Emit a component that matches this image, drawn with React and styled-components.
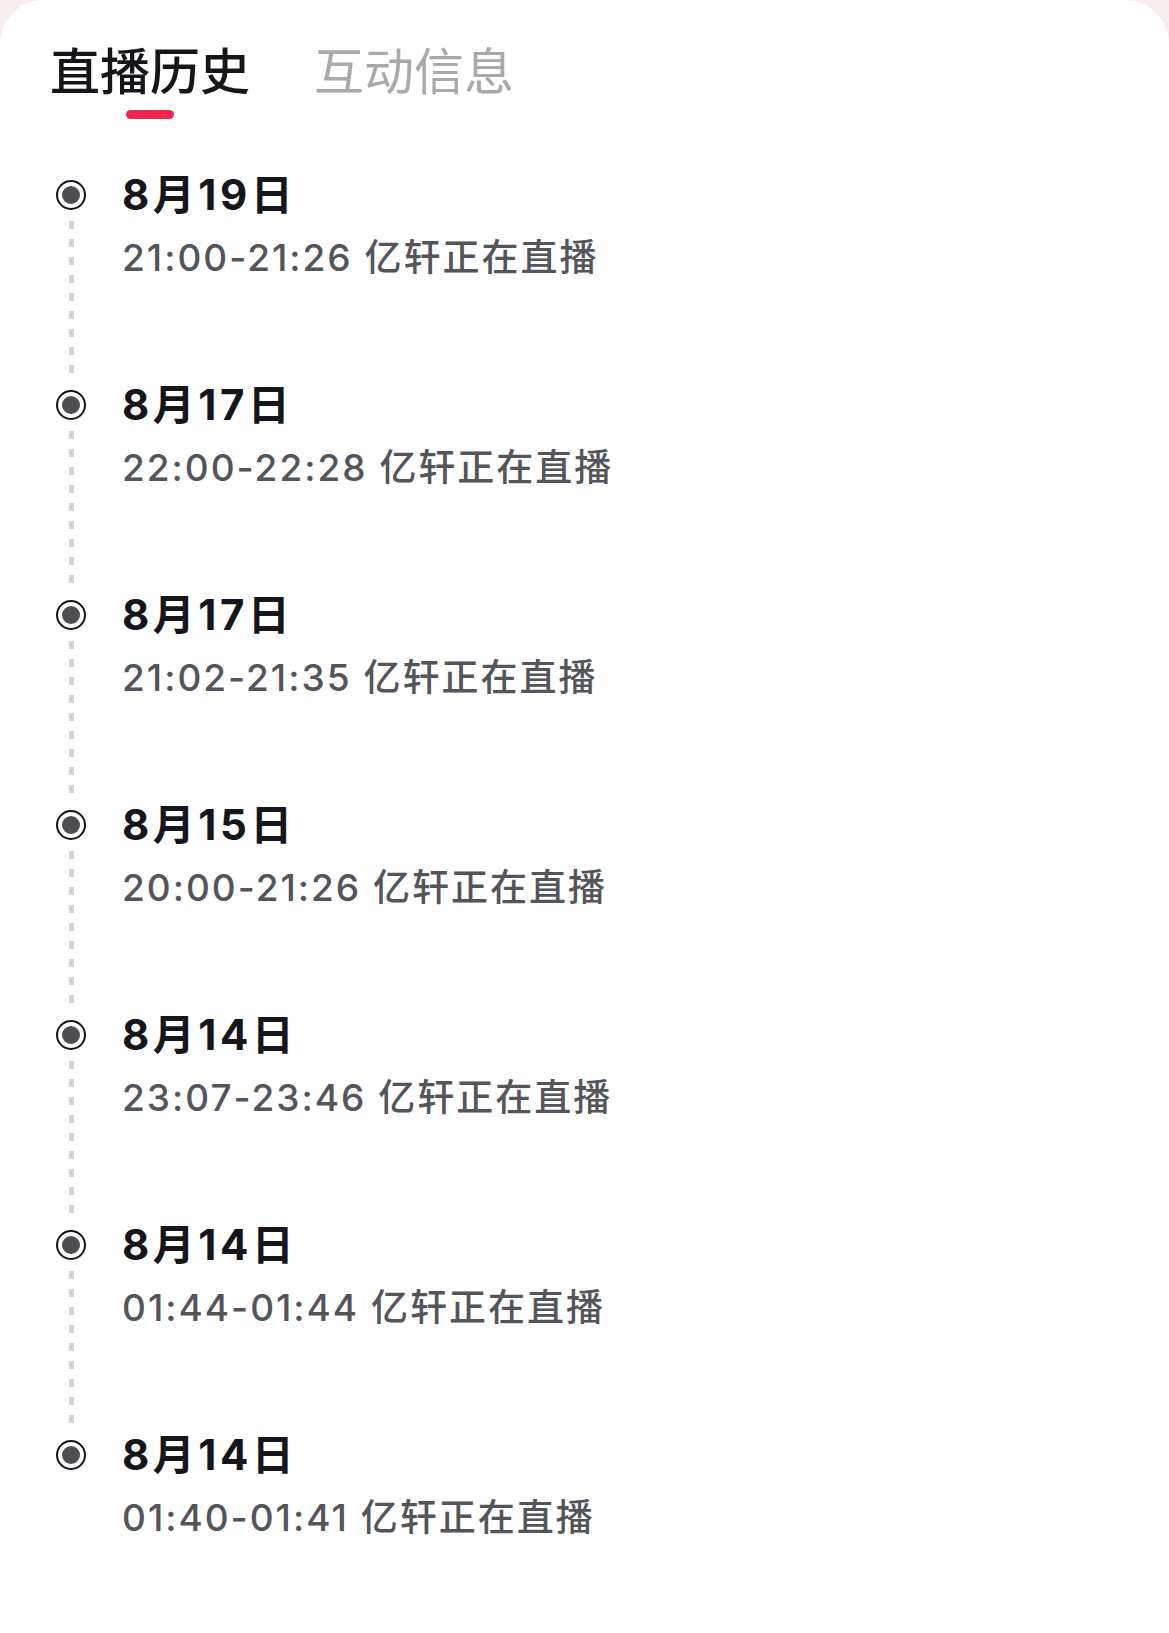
import styled, { createGlobalStyle } from 'styled-components';

const sessions = [
  { date: '8月19日', time: '21:00-21:26', text: '亿轩正在直播' },
  { date: '8月17日', time: '22:00-22:28', text: '亿轩正在直播' },
  { date: '8月17日', time: '21:02-21:35', text: '亿轩正在直播' },
  { date: '8月15日', time: '20:00-21:26', text: '亿轩正在直播' },
  { date: '8月14日', time: '23:07-23:46', text: '亿轩正在直播' },
  { date: '8月14日', time: '01:44-01:44', text: '亿轩正在直播' },
  { date: '8月14日', time: '01:40-01:41', text: '亿轩正在直播' },
];

const GlobalStyle = createGlobalStyle`
  html, body {
    margin: 0;
    padding: 0;
    background: #f6eeec;
  }
  body {
    font-family: "Inter", "Noto Sans CJK SC", sans-serif;
    -webkit-font-smoothing: antialiased;
  }
`;

const Sheet = styled.div`
  background: #ffffff;
  border-radius: 44px 44px 0 0;
  min-height: 1633px;
  box-sizing: border-box;
  padding-top: 38px;
`;

const Tabs = styled.div`
  display: flex;
  gap: 64px;
  padding-left: 50px;
`;

const Tab = styled.div`
  display: flex;
  flex-direction: column;
  align-items: center;
  font-family: "Noto Sans CJK SC", sans-serif;
  font-size: 50px;
  line-height: 60px;
  font-weight: ${({ active }) => (active ? 500 : 400)};
  color: ${({ active }) => (active ? '#16161a' : '#a9a9ac')};

  &::after {
    content: '';
    display: block;
    width: 48px;
    height: 9px;
    margin-top: 12px;
    border-radius: 5px;
    background: ${({ active }) => (active ? '#f1264e' : 'transparent')};
  }
`;

const Timeline = styled.div`
  display: flex;
  flex-direction: column;
  padding: 61px 0 0 56px;
`;

const Item = styled.div`
  display: flex;
  height: 210px;
`;

const Rail = styled.div`
  width: 30px;
  display: flex;
  flex-direction: column;
  align-items: center;
  flex-shrink: 0;
`;

const Dot = styled.div`
  width: 30px;
  height: 30px;
  box-sizing: border-box;
  border: 2px solid #141418;
  border-radius: 50%;
  display: flex;
  align-items: center;
  justify-content: center;
  background: #ffffff;

  &::before {
    content: '';
    width: 18px;
    height: 18px;
    border-radius: 50%;
    background: #4d4d53;
  }
`;

const Dashes = styled.div`
  flex: 1;
  width: 5px;
  margin: 11px 0 14px;
  background-image: linear-gradient(to bottom, #d4d4d6 0, #d4d4d6 8px, transparent 8px, transparent 18px);
  background-size: 5px 18px;
  background-repeat: repeat-y;
`;

const Body = styled.div`
  margin-left: 36px;
  display: flex;
  flex-direction: column;
`;

const DateLine = styled.div`
  font-size: 42px;
  line-height: 30px;
  font-weight: 700;
  letter-spacing: 3.5px;
  color: #15151b;
`;

const TimeLine = styled.div`
  margin-top: 26px;
  font-size: 37px;
  line-height: 44px;
  font-weight: 500;
  letter-spacing: 2px;
  color: #54545b;
  white-space: nowrap;
`;

export default function App() {
  return (
    <>
      <GlobalStyle />
      <Sheet>
        <Tabs>
          <Tab active>直播历史</Tab>
          <Tab>互动信息</Tab>
        </Tabs>
        <Timeline>
          {sessions.map((s, i) => (
            <Item key={i}>
              <Rail>
                <Dot />
                {i < sessions.length - 1 && <Dashes />}
              </Rail>
              <Body>
                <DateLine>{s.date}</DateLine>
                <TimeLine>
                  {s.time} {s.text}
                </TimeLine>
              </Body>
            </Item>
          ))}
        </Timeline>
      </Sheet>
    </>
  );
}
